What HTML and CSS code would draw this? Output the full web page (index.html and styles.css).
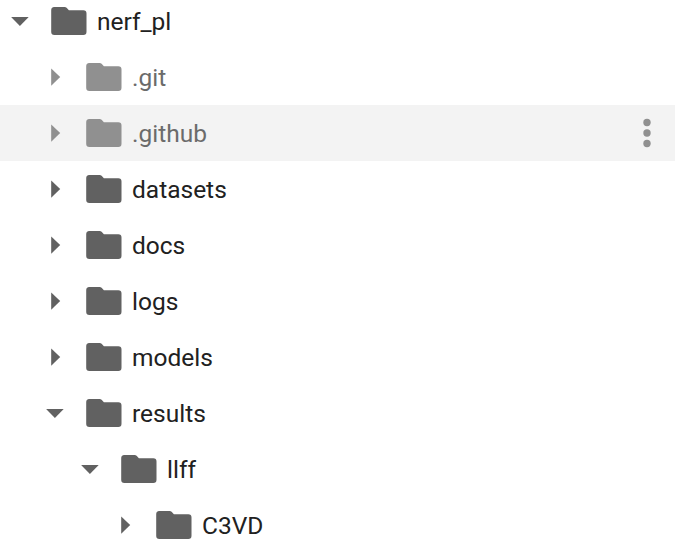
FILE: index.html
```html
<!DOCTYPE html>
<html lang="en">
<head>
<meta charset="utf-8">
<title>Files</title>
<link rel="stylesheet" href="styles.css">
</head>
<body>
<svg class="defs" width="0" height="0">
  <symbol id="folder" viewBox="0 0 36 28"><path d="M3.2 0H13.6Q14.8 0 15.6.8L17.9 3.2H32.3A3.2 3.2 0 0 1 35.5 6.4V24.8A3.2 3.2 0 0 1 32.3 28H3.4A3.2 3.2 0 0 1 .2 24.8V3.2A3.2 3.2 0 0 1 3.2 0z"/></symbol>
  <symbol id="closed" viewBox="0 0 18 18"><path d="M5.2.4v17.4L14.2 9.1z"/></symbol>
  <symbol id="open" viewBox="0 0 18 18"><path d="M.1 5h17.6l-8.8 9z"/></symbol>
</svg>
<ul class="tree">
  <li class="row level-0"><svg class="arrow"><use href="#open"/></svg><svg class="folder"><use href="#folder"/></svg><span class="name">nerf_pl</span></li>
  <li class="row level-1 hidden-file"><svg class="arrow"><use href="#closed"/></svg><svg class="folder"><use href="#folder"/></svg><span class="name">.git</span></li>
  <li class="row level-1 hidden-file hovered"><svg class="arrow"><use href="#closed"/></svg><svg class="folder"><use href="#folder"/></svg><span class="name">.github</span><svg class="more" viewBox="0 0 8 30"><circle cx="4" cy="4.5" r="3.7"/><circle cx="4" cy="15" r="3.7"/><circle cx="4" cy="25.5" r="3.7"/></svg></li>
  <li class="row level-1"><svg class="arrow"><use href="#closed"/></svg><svg class="folder"><use href="#folder"/></svg><span class="name">datasets</span></li>
  <li class="row level-1"><svg class="arrow"><use href="#closed"/></svg><svg class="folder"><use href="#folder"/></svg><span class="name">docs</span></li>
  <li class="row level-1"><svg class="arrow"><use href="#closed"/></svg><svg class="folder"><use href="#folder"/></svg><span class="name">logs</span></li>
  <li class="row level-1"><svg class="arrow"><use href="#closed"/></svg><svg class="folder"><use href="#folder"/></svg><span class="name">models</span></li>
  <li class="row level-1"><svg class="arrow"><use href="#open"/></svg><svg class="folder"><use href="#folder"/></svg><span class="name">results</span></li>
  <li class="row level-2"><svg class="arrow"><use href="#open"/></svg><svg class="folder"><use href="#folder"/></svg><span class="name">llff</span></li>
  <li class="row level-3"><svg class="arrow"><use href="#closed"/></svg><svg class="folder"><use href="#folder"/></svg><span class="name">C3VD</span></li>
</ul>
</body>
</html>
```
FILE: styles.css
```css
body {
  margin: 0;
  height: 556px;
  overflow: hidden;
  background: #fff;
  font-family: Roboto, sans-serif;
  font-size: 24.5px;
  color: #212121;
}
.defs { position: absolute; }
.tree {
  list-style: none;
  margin: -7px 0 0;
  padding: 0;
}
.row {
  display: flex;
  align-items: center;
  box-sizing: border-box;
  height: 56px;
  padding-right: 24px;
  fill: #616161;
}
.level-0 { padding-left: 11px; }
.level-1 { padding-left: 46px; }
.level-2 { padding-left: 81px; }
.level-3 { padding-left: 116px; }
.arrow { width: 18px; height: 18px; }
.folder { width: 36px; height: 28px; margin: 0 10px 0 22px; }
.name { line-height: 54px; padding-top: 1px; }
.hidden-file { color: #6b6b6b; fill: #909090; }
.hovered { background: #f3f3f3; }
.more { width: 8px; height: 30px; margin-left: auto; }
```
